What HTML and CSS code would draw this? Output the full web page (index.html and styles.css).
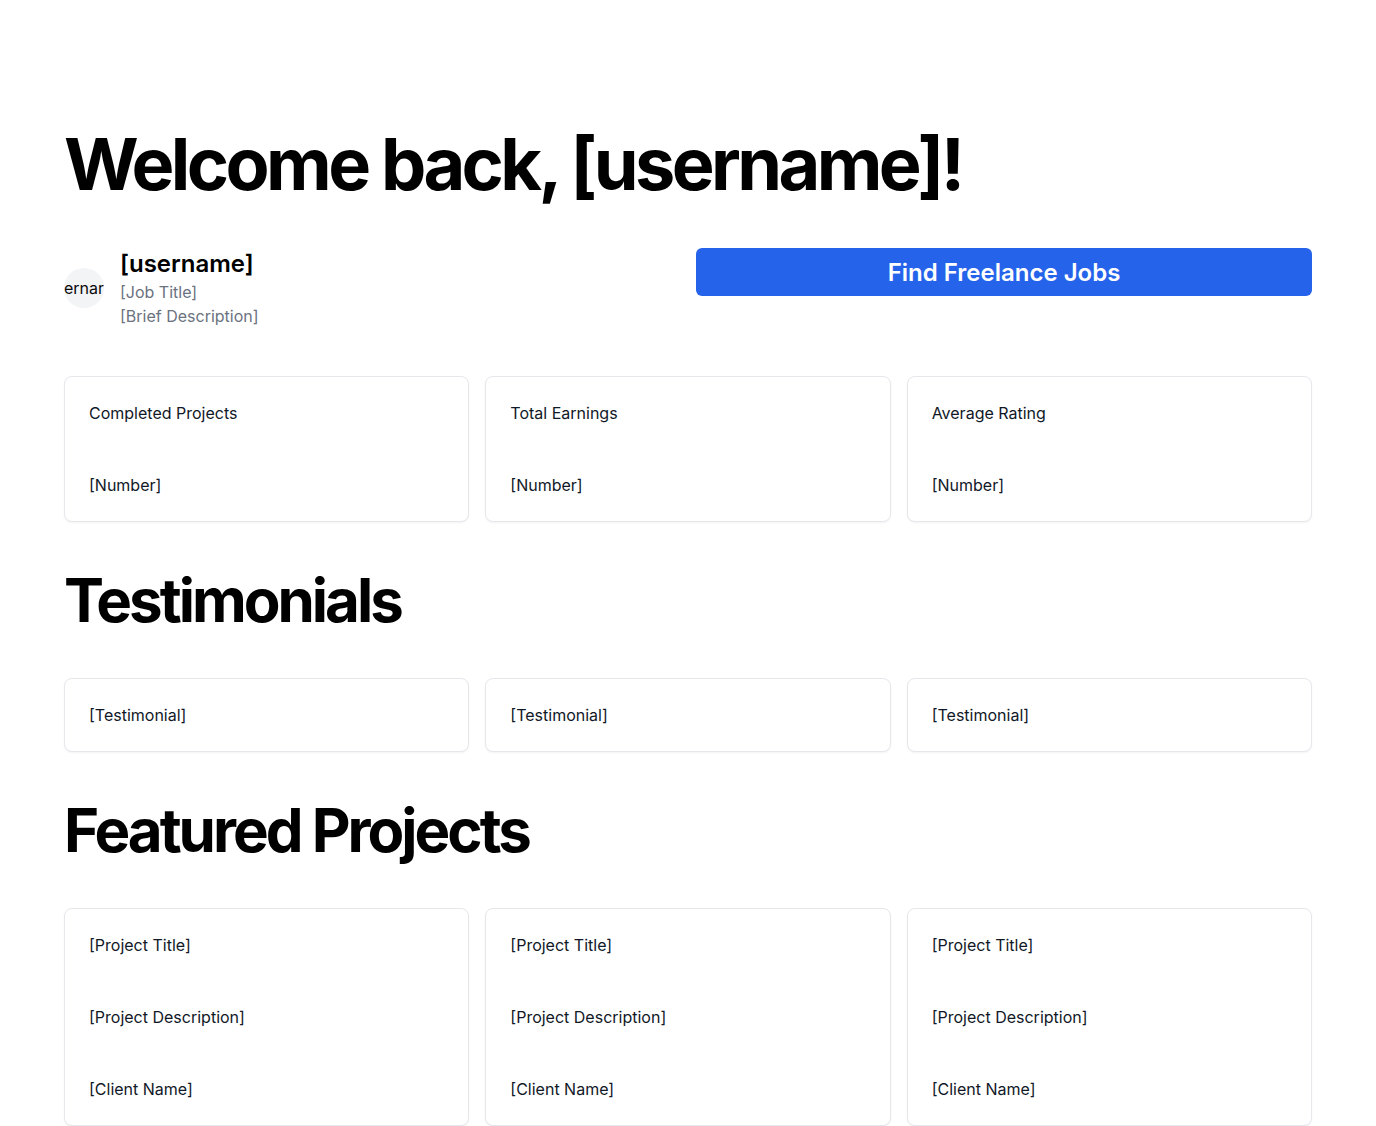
FILE: index.html
```html
<!DOCTYPE html>
<html lang="en">
<head>
<meta charset="utf-8">
<title>Dashboard</title>
<link rel="stylesheet" href="styles.css">
</head>
<body>
<main class="page">
  <h1 class="title">Welcome back, [username]!</h1>
  <section class="profile-row">
    <div class="profile">
      <div class="avatar"><span>ernar</span></div>
      <div class="profile-text">
        <div class="profile-name">[username]</div>
        <div class="profile-sub">[Job Title]</div>
        <div class="profile-sub">[Brief Description]</div>
      </div>
    </div>
    <button class="cta">Find Freelance Jobs</button>
  </section>

  <section class="grid">
    <div class="card"><div>Completed Projects</div><div>[Number]</div></div>
    <div class="card"><div>Total Earnings</div><div>[Number]</div></div>
    <div class="card"><div>Average Rating</div><div>[Number]</div></div>
  </section>

  <h2 class="section-title">Testimonials</h2>
  <section class="grid">
    <div class="card"><div>[Testimonial]</div></div>
    <div class="card"><div>[Testimonial]</div></div>
    <div class="card"><div>[Testimonial]</div></div>
  </section>

  <h2 class="section-title">Featured Projects</h2>
  <section class="grid">
    <div class="card"><div>[Project Title]</div><div>[Project Description]</div><div>[Client Name]</div></div>
    <div class="card"><div>[Project Title]</div><div>[Project Description]</div><div>[Client Name]</div></div>
    <div class="card"><div>[Project Title]</div><div>[Project Description]</div><div>[Client Name]</div></div>
  </section>
</main>
</body>
</html>
```

FILE: styles.css
```css
* { box-sizing: border-box; }
html, body { margin: 0; padding: 0; background: #fff; }
body {
  font-family: Inter, "Noto Sans", sans-serif;
  color: #0a0a0a;
  font-size: 16px;
  line-height: 24px;
}
.page {
  padding: 128px 64px 48px;
  display: flex;
  flex-direction: column;
  gap: 48px;
}
.title {
  margin: 0;
  font-size: 72px;
  line-height: 72px;
  font-weight: 700;
  letter-spacing: -0.05em;
  color: #000;
}
.section-title {
  margin: 0;
  font-size: 60px;
  line-height: 60px;
  font-weight: 700;
  letter-spacing: -0.05em;
  color: #000;
}
.profile-row {
  display: grid;
  grid-template-columns: 1fr 1fr;
  gap: 16px;
  align-items: start;
}
.profile {
  display: flex;
  align-items: center;
  gap: 16px;
}
.avatar {
  width: 40px;
  height: 40px;
  border-radius: 50%;
  background: #f3f4f6;
  overflow: hidden;
  display: flex;
  align-items: center;
  justify-content: center;
  flex-shrink: 0;
  color: #0a0a0a;
  font-size: 16px;
}
.profile-name {
  font-size: 24px;
  line-height: 32px;
  font-weight: 600;
  color: #000;
}
.profile-sub {
  color: #6b7280;
}
.cta {
  height: 48px;
  border: none;
  border-radius: 6px;
  background: #2563eb;
  color: #fff;
  font-family: inherit;
  font-size: 24px;
  font-weight: 600;
  cursor: pointer;
}
.grid {
  display: grid;
  grid-template-columns: repeat(3, 1fr);
  gap: 16px;
}
.card {
  border: 1px solid #e5e7eb;
  border-radius: 8px;
  background: #fff;
  box-shadow: 0 1px 2px rgba(0,0,0,0.05);
  padding: 24px;
  display: flex;
  flex-direction: column;
  gap: 48px;
  color: #111827;
}
```
